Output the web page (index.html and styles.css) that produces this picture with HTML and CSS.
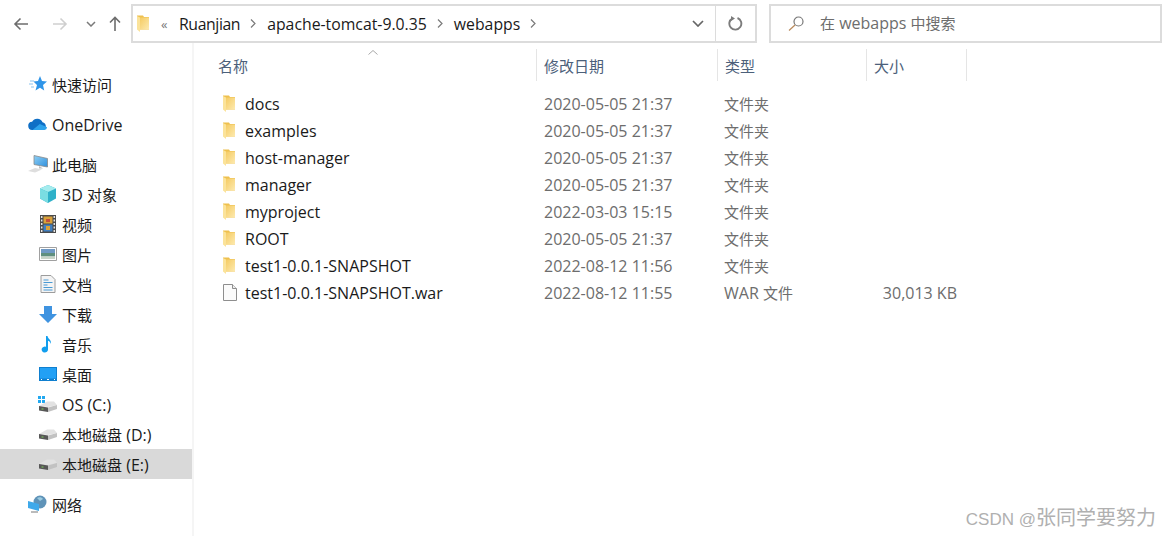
FILE: index.html
```html
<!DOCTYPE html>
<html lang="zh-CN">
<head>
    <meta charset="UTF-8">
    <title>webapps</title>
    <link rel="stylesheet" href="styles.css">
</head>
<body>
    <svg class="defs" width="0" height="0">
        <defs>
            <linearGradient id="folder-fill" x1="0" y1="0" x2="1" y2="1">
                <stop offset="0" stop-color="#f5cb62"/>
                <stop offset="1" stop-color="#fdeab0"/>
            </linearGradient>
            <linearGradient id="screen-fill" x1="0" y1="0" x2="1" y2="1">
                <stop offset="0" stop-color="#8fd0f5"/>
                <stop offset="1" stop-color="#2f8fdc"/>
            </linearGradient>
            <symbol id="folder" viewBox="0 0 12 17">
                <path d="M0 .5h6l1 1.500h5v12.500H3L0 14z" fill="#eec04e"/>
                <path d="M3 2.500h9v12H3z" fill="url(#folder-fill)"/>
                <path d="M0 1l3 1.500V17l-3-2.500z" fill="#fbe39a"/>
            </symbol>
            <symbol id="drive" viewBox="0 0 20 13">
                <path d="M1 6l8-4.500h7L19 5l-9 2z" fill="#e2e2e2"/>
                <path d="M1 6l9 1.500v4.500L1 10.500z" fill="#575757"/>
                <path d="M10 7.500L19 5v4l-9 3z" fill="#c2c2c2"/>
                <path d="M3.500 8.500h2v1h-2z" fill="#7fd05a"/>
            </symbol>
        </defs>
    </svg>

    <div class="toolbar">
        <div class="nav-buttons">
            <svg class="nav-back" width="16" height="14" viewBox="0 0 16 14"><path d="M15 7H2M7.500 1.500L2 7l5.500 5.500" fill="none" stroke="#6d6d6d" stroke-width="1.600"/></svg>
            <svg class="nav-forward" width="16" height="14" viewBox="0 0 16 14"><path d="M1 7h13M8.500 1.500L14 7l-5.500 5.500" fill="none" stroke="#cfcfcf" stroke-width="1.600"/></svg>
            <svg class="nav-recent" width="10" height="6" viewBox="0 0 10 6"><path d="M1 1l4 4 4-4" fill="none" stroke="#7a7a7a" stroke-width="1.500"/></svg>
            <svg class="nav-up" width="12" height="15" viewBox="0 0 12 15"><path d="M6 15V2M1 6.500L6 1.500l5 5" fill="none" stroke="#6d6d6d" stroke-width="1.600"/></svg>
        </div>
        <div class="address-bar">
            <svg class="address-folder" width="12" height="17"><use href="#folder"/></svg>
            <span class="crumb-more">«</span>
            <span class="crumb crumb-first">Ruanjian</span>
            <svg class="crumb-sep" width="6" height="9" viewBox="0 0 6 9"><path d="M1 .5l4 4-4 4" fill="none" stroke="#7a7a7a" stroke-width="1.200"/></svg>
            <span class="crumb">apache-tomcat-9.0.35</span>
            <svg class="crumb-sep" width="6" height="9" viewBox="0 0 6 9"><path d="M1 .5l4 4-4 4" fill="none" stroke="#7a7a7a" stroke-width="1.200"/></svg>
            <span class="crumb">webapps</span>
            <svg class="crumb-sep" width="6" height="9" viewBox="0 0 6 9"><path d="M1 .5l4 4-4 4" fill="none" stroke="#7a7a7a" stroke-width="1.200"/></svg>
            <svg class="address-drop" width="12" height="7" viewBox="0 0 12 7"><path d="M1 1l5 5 5-5" fill="none" stroke="#666" stroke-width="1.700"/></svg>
            <div class="refresh">
                <svg width="15" height="15" viewBox="0 0 15 15"><path d="M9.500 2A6 6 0 1 1 4.500 2.300" fill="none" stroke="#7c7c7c" stroke-width="1.900"/><path d="M4 .5l4 2.500-4 2.500z" fill="#7c7c7c" transform="translate(-1 -.5)"/></svg>
            </div>
        </div>
        <div class="search-bar">
            <svg width="16" height="15" viewBox="0 0 16 15"><circle cx="10.500" cy="5.500" r="4.500" fill="none" stroke="#777" stroke-width="1.200"/><path d="M7 9L1 14.500" stroke="#b98a5c" stroke-width="1.200"/></svg>
            <span class="search-text"><span class="cjk">在</span> webapps <span class="cjk">中搜索</span></span>
        </div>
    </div>

    <div class="main">
        <nav class="sidebar">
            <div class="nav-item top-item">
                <svg width="18" height="18" viewBox="0 0 18 18"><path d="M11 1l2 5 5 .5-4 3.500 1.200 5.500L11 12.800 6.500 15.500 8 10 4.500 6.500l4.500-.5z" fill="#2f95e8"/><path d="M1 6h4M0 9h4M2 12h3" stroke="#8cc4ef" stroke-width="1"/></svg>
                <span class="cjk">快速访问</span>
            </div>
            <div class="nav-item top-item gap-before">
                <svg width="22" height="14" viewBox="0 0 22 14"><path d="M5 13.500a4.500 4.500 0 0 1-.5-9A6.500 6.500 0 0 1 16 5a4.500 4.500 0 0 1 1 8.500z" fill="#0f6fc6"/><path d="M5 13.500L13 7l8 3.500a3.500 3.500 0 0 1-3 3z" fill="#2ea3ec"/></svg>
                <span class="latin-label">OneDrive</span>
            </div>
            <div class="nav-item top-item gap-before">
                <svg width="20" height="18" viewBox="0 0 20 18"><path d="M6 .5L19.500 3.500V12L6 9.500z" fill="url(#screen-fill)" stroke="#8a8a8a" stroke-width=".8"/><path d="M0 16l7-3 7 1.500-7 3z" fill="#dedede"/><path d="M11 11v2.500h4z" fill="#bdbdbd"/></svg>
                <span class="cjk">此电脑</span>
            </div>
            <div class="nav-item">
                <svg width="18" height="18" viewBox="0 0 18 18"><path d="M9 0l8 3.500v10L9 18l-8-4.500v-10z" fill="#2fb1c9"/><path d="M9 0l8 3.500L9 7 1 3.500z" fill="#a5ecee"/><path d="M1 3.500L9 7v11l-8-4.500z" fill="#7adde2"/></svg>
                <span class="latin-label">3D <span class="cjk">对象</span></span>
            </div>
            <div class="nav-item">
                <svg width="18" height="18" viewBox="0 0 18 18"><path d="M1 0h16v18H1z" fill="#4a4a4a"/><path d="M4.500 1.500h9v7h-9z" fill="#d9a13a"/><path d="M4.500 9.500h9v7h-9z" fill="#3f7fc0"/><path d="M7 4h4v3H7z" fill="#c2503c"/><path d="M7 11h4v4H7z" fill="#d9a13a"/><path d="M2.700 1v16M15.300 1v16" stroke="#e6e6e6" stroke-width="1.500" stroke-dasharray="2 1.500"/></svg>
                <span class="cjk">视频</span>
            </div>
            <div class="nav-item">
                <svg width="18" height="14" viewBox="0 0 18 14"><path d="M.5.500h17v13H.5z" fill="#fff" stroke="#a0a0a0"/><path d="M2 2h14v4H2z" fill="#6f99c4"/><path d="M2 6h14v3.500H2z" fill="#5f8f7e"/><path d="M2 9.500h14V12H2z" fill="#c8d4c8"/></svg>
                <span class="cjk">图片</span>
            </div>
            <div class="nav-item">
                <svg width="15" height="18" viewBox="0 0 15 18"><path d="M.5.500h10l4 4v13H.5z" fill="#f4f4f4" stroke="#9c9c9c"/><path d="M3 5h5M3 7.500h9M3 10h4M3 12.500h9M3 15h9" stroke="#4a9ad4" stroke-width="1"/></svg>
                <span class="cjk">文档</span>
            </div>
            <div class="nav-item">
                <svg width="18" height="17" viewBox="0 0 18 17"><path d="M5 0h8v8h5l-9 9-9-9h5z" fill="#3f93e0"/></svg>
                <span class="cjk">下载</span>
            </div>
            <div class="nav-item">
                <svg width="18" height="18" viewBox="0 0 18 18"><path d="M7 1h1.500c.5 3 4 3.500 3.500 8-.5-2-2-3-3-3.200V14.500a3.200 3 0 1 1-2-2.700z" fill="#119eee"/></svg>
                <span class="cjk">音乐</span>
            </div>
            <div class="nav-item">
                <svg width="18" height="14" viewBox="0 0 18 14"><path d="M0 0h18v14H0z" fill="#0f7fcf"/><path d="M1 1h16v10.500H1z" fill="#22a0f5"/><path d="M2 12.500h1M8 12.500h2M15 12.500h1" stroke="#fff"/></svg>
                <span class="cjk">桌面</span>
            </div>
            <div class="nav-item">
                <svg width="20" height="18" viewBox="0 0 20 18"><path d="M0 1h3v3H0zM4 1h3v3H4zM0 5h3v3H0zM4 5h3v3H4z" fill="#21a8f0"/><use href="#drive" y="5" width="20" height="13"/></svg>
                <span class="latin-label">OS (C:)</span>
            </div>
            <div class="nav-item">
                <svg width="20" height="13"><use href="#drive"/></svg>
                <span class="latin-label"><span class="cjk">本地磁盘</span> (D:)</span>
            </div>
            <div class="nav-item selected">
                <svg width="20" height="13"><use href="#drive"/></svg>
                <span class="latin-label"><span class="cjk">本地磁盘</span> (E:)</span>
            </div>
            <div class="nav-item top-item gap-before">
                <svg width="20" height="19" viewBox="0 0 20 19"><circle cx="12" cy="7" r="6.500" fill="#5f93b8"/><path d="M9 3c2-1.500 5-1 6 1l-3 2z" fill="#9ccbe0"/><path d="M0 6l11 3v7L0 13z" fill="#3fa9ea"/><path d="M3 16h7v2H3z" fill="#bbb"/></svg>
                <span class="cjk">网络</span>
            </div>
        </nav>

        <section class="file-pane">
            <div class="sort-arrow">
                <svg width="10" height="5" viewBox="0 0 10 5"><path d="M.5 4.500L5 .5l4.500 4" fill="none" stroke="#a8a8a8"/></svg>
            </div>
            <div class="file-head cjk">
                <div class="col-name">名称</div>
                <div class="col-date">修改日期</div>
                <div class="col-type">类型</div>
                <div class="col-size">大小</div>
            </div>
            <div class="file-list">
                <div class="file-row">
                    <div class="col-name"><svg width="12" height="17"><use href="#folder"/></svg>docs</div>
                    <div class="col-date">2020-05-05 21:37</div>
                    <div class="col-type cjk">文件夹</div>
                    <div class="col-size"></div>
                </div>
                <div class="file-row">
                    <div class="col-name"><svg width="12" height="17"><use href="#folder"/></svg>examples</div>
                    <div class="col-date">2020-05-05 21:37</div>
                    <div class="col-type cjk">文件夹</div>
                    <div class="col-size"></div>
                </div>
                <div class="file-row">
                    <div class="col-name"><svg width="12" height="17"><use href="#folder"/></svg>host-manager</div>
                    <div class="col-date">2020-05-05 21:37</div>
                    <div class="col-type cjk">文件夹</div>
                    <div class="col-size"></div>
                </div>
                <div class="file-row">
                    <div class="col-name"><svg width="12" height="17"><use href="#folder"/></svg>manager</div>
                    <div class="col-date">2020-05-05 21:37</div>
                    <div class="col-type cjk">文件夹</div>
                    <div class="col-size"></div>
                </div>
                <div class="file-row">
                    <div class="col-name"><svg width="12" height="17"><use href="#folder"/></svg>myproject</div>
                    <div class="col-date">2022-03-03 15:15</div>
                    <div class="col-type cjk">文件夹</div>
                    <div class="col-size"></div>
                </div>
                <div class="file-row">
                    <div class="col-name"><svg width="12" height="17"><use href="#folder"/></svg>ROOT</div>
                    <div class="col-date">2020-05-05 21:37</div>
                    <div class="col-type cjk">文件夹</div>
                    <div class="col-size"></div>
                </div>
                <div class="file-row">
                    <div class="col-name"><svg width="12" height="17"><use href="#folder"/></svg>test1-0.0.1-SNAPSHOT</div>
                    <div class="col-date">2022-08-12 11:56</div>
                    <div class="col-type cjk">文件夹</div>
                    <div class="col-size"></div>
                </div>
                <div class="file-row">
                    <div class="col-name"><svg class="file-icon" width="14" height="17" viewBox="0 0 14 17"><path d="M.5.500h9l4 4v12H.5z" fill="#fbfbfb" stroke="#8e8e8e"/><path d="M9.500.5v4h4" fill="#eee" stroke="#8e8e8e"/></svg>test1-0.0.1-SNAPSHOT.war</div>
                    <div class="col-date">2022-08-12 11:55</div>
                    <div class="col-type">WAR <span class="cjk">文件</span></div>
                    <div class="col-size">30,013 KB</div>
                </div>
            </div>
        </section>
    </div>

    <div class="watermark"><span class="watermark-id">CSDN @</span>张同学要努力</div>
</body>
</html>
```

FILE: styles.css
```css
* {
    box-sizing: border-box;
}

html, body {
    margin: 0;
    height: 536px;
    overflow: hidden;
}

body {
    position: relative;
    background: #fff;
    color: #1a1a1a;
    font-family: "Open Sans", "Noto Sans CJK SC", sans-serif;
    font-size: 16px;
}

.cjk {
    font-size: 15px;
}

.defs {
    position: absolute;
}

svg {
    flex-shrink: 0;
}

.toolbar {
    display: flex;
    align-items: center;
    height: 39px;
    margin-top: 4px;
    padding-right: 7px;
}

.nav-buttons {
    display: flex;
    align-items: center;
    width: 131px;
    padding-left: 13px;
}

.nav-forward {
    margin-left: 23px;
}

.nav-recent {
    margin-left: 18px;
}

.nav-up {
    margin-left: 13px;
}

.address-bar {
    display: flex;
    align-items: center;
    width: 626px;
    height: 39px;
    border: 2px solid #dcdcdc;
    padding-left: 4px;
}

.address-folder {
    margin-right: 12px;
}

.crumb-more {
    width: 18px;
    color: #777;
    font-size: 13px;
}

.crumb {
    font-size: 15.800px;
    color: #1a1a1a;
}

.crumb-first {
    letter-spacing: -.4px;
}

.crumb-sep {
    margin: 0 11px 0 10px;
}

.address-drop {
    margin-left: auto;
    margin-right: 11px;
}

.refresh {
    display: flex;
    align-items: center;
    justify-content: center;
    width: 40px;
    height: 100%;
    border-left: 1px solid #dcdcdc;
}

.search-bar {
    display: flex;
    align-items: center;
    gap: 16px;
    width: 393px;
    height: 39px;
    margin-left: 12px;
    padding-left: 17px;
    border: 2px solid #dcdcdc;
    color: #6d6d6d;
}

.search-text {
    padding-bottom: 2px;
}

.main {
    display: flex;
    height: 493px;
}

.sidebar {
    width: 194px;
    padding-top: 26px;
    border-right: 2px solid #f5f5f5;
}

.nav-item {
    display: flex;
    align-items: center;
    height: 30px;
    padding-left: 38px;
}

.nav-item svg {
    width: 20px;
    margin-right: 4px;
}

.latin-label {
    padding-top: 2px;
}

.top-item {
    padding-left: 28px;
}

.gap-before {
    margin-top: 10px;
}

.selected {
    background: #d9d9d9;
}

.file-pane {
    position: relative;
    flex: 1;
    padding-top: 6px;
}

.sort-arrow {
    position: absolute;
    top: 6px;
    left: 174px;
    line-height: 0;
}

.file-head, .file-row {
    display: flex;
    align-items: center;
}

.file-head {
    height: 32px;
    color: #4c607a;
}

.file-head > div {
    height: 100%;
    display: flex;
    align-items: center;
    border-right: 1px solid #e5e5e5;
}

.col-name {
    width: 343px;
    padding-left: 24px;
}

.col-date {
    width: 181px;
    padding-left: 7px;
}

.col-type {
    width: 149px;
    padding-left: 7px;
}

.col-size {
    width: 100px;
    padding-left: 7px;
}

.file-list {
    padding-top: 9px;
}

.file-row {
    height: 27px;
}

.file-row .col-name {
    display: flex;
    align-items: center;
    gap: 10px;
    padding-left: 29px;
}

.file-icon {
    margin-right: -2px;
}

.file-row .col-date, .file-row .col-type {
    color: #6d6d6d;
}

.file-row .col-type {
    padding-left: 6px;
}

.file-row .col-size {
    padding: 0 10px 0 0;
    color: #6d6d6d;
    text-align: right;
}

.watermark {
    position: absolute;
    right: 13px;
    bottom: 5px;
    color: #b0b0b0;
    font-family: "Liberation Sans", "Noto Sans CJK SC", sans-serif;
    font-size: 20px;
}

.watermark-id {
    font-size: 17px;
}
```
